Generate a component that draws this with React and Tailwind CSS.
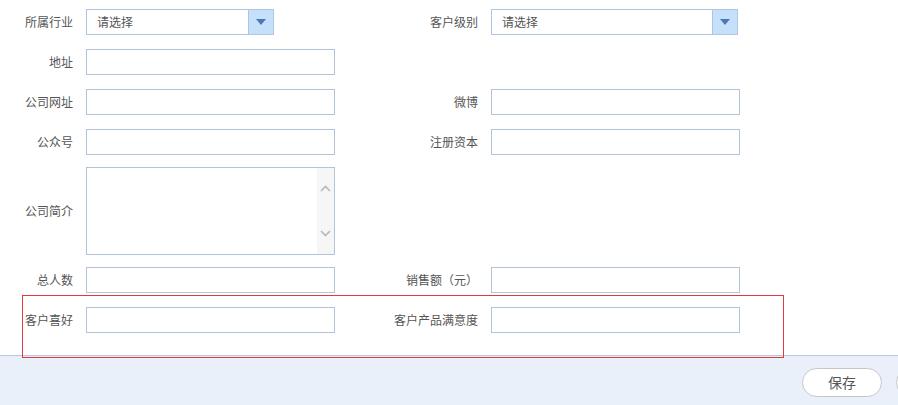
import React from 'react';

const font = { fontFamily: '"Noto Sans CJK SC", "Microsoft YaHei", sans-serif' };

function Label({ children, wide }) {
  return (
    <div className={`${wide ? 'w-[144px]' : 'w-[74px]'} shrink-0 text-right text-[12px] text-[#555] leading-none pr-px`}>
      {children}
    </div>
  );
}

function TextInput() {
  return <div className="ml-[12px] w-[249px] h-[26px] shrink-0 border border-[#b3c3da] bg-white" />;
}

function Select({ width }) {
  return (
    <div className={`ml-[12px] ${width} h-[26px] shrink-0 border border-[#aec6e4] bg-white flex`}>
      <div className="flex-1 flex items-center pl-[10px] text-[12px] text-[#555]">请选择</div>
      <div className="w-[25px] h-full bg-[#c5e0fb] border-l border-[#aec6e4] flex items-center justify-center">
        <svg width="10" height="6" viewBox="0 0 10 6">
          <path d="M0 0 H10 L5 6 Z" fill="#4b79b5" />
        </svg>
      </div>
    </div>
  );
}

function Textarea() {
  return (
    <div className="ml-[12px] w-[249px] h-[88px] shrink-0 border border-[#b3c3da] bg-white flex justify-end">
      <div className="w-[17px] h-full bg-[#f6f6f6] flex flex-col items-center justify-between py-[17px]">
        <svg width="11" height="7" viewBox="0 0 11 7">
          <path d="M1 6 L5.5 1.5 L10 6" stroke="#b8b8b8" strokeWidth="1.6" fill="none" />
        </svg>
        <svg width="11" height="7" viewBox="0 0 11 7">
          <path d="M1 1 L5.5 5.5 L10 1" stroke="#b8b8b8" strokeWidth="1.6" fill="none" />
        </svg>
      </div>
    </div>
  );
}

export default function App() {
  return (
    <div className="relative w-[898px] h-[405px] overflow-hidden bg-white" style={font}>
      <div className="h-[355px] pt-[9px]">
        <div className="flex items-center h-[26px]">
          <Label>所属行业</Label>
          <Select width="w-[188px]" />
          <div className="w-[61px]" />
          <Label wide>客户级别</Label>
          <Select width="w-[247px]" />
        </div>
        <div className="flex items-center h-[26px] mt-[14px]">
          <Label>地址</Label>
          <TextInput />
        </div>
        <div className="flex items-center h-[26px] mt-[14px]">
          <Label>公司网址</Label>
          <TextInput />
          <Label wide>微博</Label>
          <TextInput />
        </div>
        <div className="flex items-center h-[26px] mt-[14px]">
          <Label>公众号</Label>
          <TextInput />
          <Label wide>注册资本</Label>
          <TextInput />
        </div>
        <div className="flex items-center h-[88px] mt-[12px]">
          <Label>公司简介</Label>
          <Textarea />
        </div>
        <div className="flex items-center h-[26px] mt-[12px]">
          <Label>总人数</Label>
          <TextInput />
          <Label wide>销售额（元）</Label>
          <TextInput />
        </div>
        <div className="flex items-center h-[26px] mt-[14px]">
          <Label>客户喜好</Label>
          <TextInput />
          <Label wide>客户产品满意度</Label>
          <TextInput />
        </div>
      </div>

      <div className="h-[50px] border-t border-[#b9c9dd] bg-[#e9f0fa] flex items-start pt-[12px] pl-[802px] gap-[14px]">
        <button className="w-[80px] h-[29px] shrink-0 rounded-full border border-[#c6c6c6] bg-white text-[14px] text-[#555]">
          保存
        </button>
        <button className="w-[80px] h-[29px] shrink-0 rounded-full border border-[#c6c6c6] bg-white" />
      </div>

      {/* annotation box */}
      <div className="absolute left-[22px] top-[295px] w-[762px] h-[63px] border border-[#e4393c] pointer-events-none" />
    </div>
  );
}
